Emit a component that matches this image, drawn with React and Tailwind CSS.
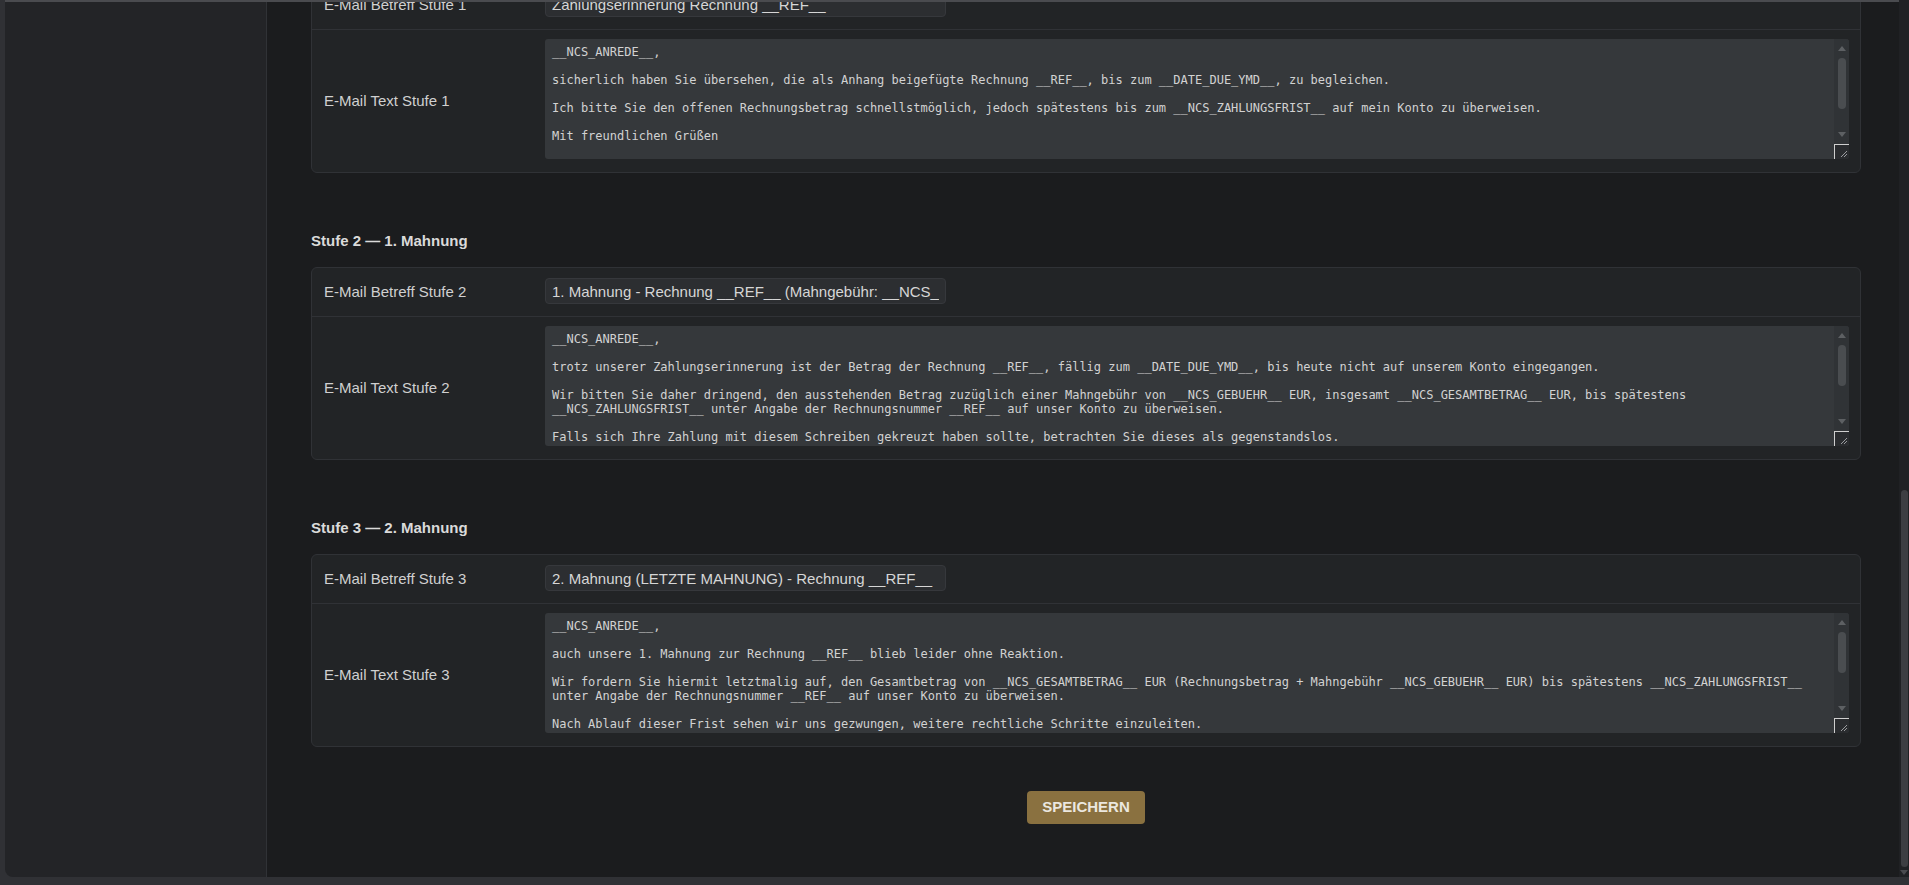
import React from "react";

const stages = [
  {
    level: 1,
    title: "Stufe 1 — Zahlungserinnerung",
    subject: "Zahlungserinnerung Rechnung __REF__",
    thumb: "h-[51px]",
    body:
      "__NCS_ANREDE__,\n\nsicherlich haben Sie übersehen, die als Anhang beigefügte Rechnung __REF__, bis zum __DATE_DUE_YMD__, zu begleichen.\n\nIch bitte Sie den offenen Rechnungsbetrag schnellstmöglich, jedoch spätestens bis zum __NCS_ZAHLUNGSFRIST__ auf mein Konto zu überweisen.\n\nMit freundlichen Grüßen\n\n__NCS_FIRMA__",
  },
  {
    level: 2,
    title: "Stufe 2 — 1. Mahnung",
    subject: "1. Mahnung - Rechnung __REF__ (Mahngebühr: __NCS_GEBUEHR__ EUR)",
    thumb: "h-[41px]",
    body:
      "__NCS_ANREDE__,\n\ntrotz unserer Zahlungserinnerung ist der Betrag der Rechnung __REF__, fällig zum __DATE_DUE_YMD__, bis heute nicht auf unserem Konto eingegangen.\n\nWir bitten Sie daher dringend, den ausstehenden Betrag zuzüglich einer Mahngebühr von __NCS_GEBUEHR__ EUR, insgesamt __NCS_GESAMTBETRAG__ EUR, bis spätestens __NCS_ZAHLUNGSFRIST__ unter Angabe der Rechnungsnummer __REF__ auf unser Konto zu überweisen.\n\nFalls sich Ihre Zahlung mit diesem Schreiben gekreuzt haben sollte, betrachten Sie dieses als gegenstandslos.\n\nMit freundlichen Grüßen\n\n__NCS_FIRMA__",
  },
  {
    level: 3,
    title: "Stufe 3 — 2. Mahnung",
    subject: "2. Mahnung (LETZTE MAHNUNG) - Rechnung __REF__",
    thumb: "h-[41px]",
    body:
      "__NCS_ANREDE__,\n\nauch unsere 1. Mahnung zur Rechnung __REF__ blieb leider ohne Reaktion.\n\nWir fordern Sie hiermit letztmalig auf, den Gesamtbetrag von __NCS_GESAMTBETRAG__ EUR (Rechnungsbetrag + Mahngebühr __NCS_GEBUEHR__ EUR) bis spätestens __NCS_ZAHLUNGSFRIST__ unter Angabe der Rechnungsnummer __REF__ auf unser Konto zu überweisen.\n\nNach Ablauf dieser Frist sehen wir uns gezwungen, weitere rechtliche Schritte einzuleiten.\n\nMit freundlichen Grüßen\n\n__NCS_FIRMA__",
  },
];

// dark scrollbar drawn beside the text box, with arrows and the resize grip
function TextScrollbar({ thumb }) {
  return (
    <div className="w-[15px] shrink-0 flex flex-col items-center bg-[#303336]">
      <div className="mt-[7px] w-0 h-0 border-l-[4px] border-r-[4px] border-b-[5px] border-l-transparent border-r-transparent border-b-[#5d6063]" />
      <div className={`mt-[7px] w-[8px] rounded-full bg-[#4a4d50] ${thumb}`} />
      <div className="flex-1" />
      <div className="w-0 h-0 border-l-[4px] border-r-[4px] border-t-[5px] border-l-transparent border-r-transparent border-t-[#5d6063]" />
      <div className="mt-[7px] w-[15px] h-[15px] border-t border-l border-[#cfcfcf] bg-[#2a2c2f] flex items-end justify-end">
        <svg width="9" height="9" viewBox="0 0 9 9" className="mb-[1px] mr-[1px]">
          <path d="M8 2 L2 8 M8 5 L5 8" stroke="#9a9c9f" strokeWidth="1" />
        </svg>
      </div>
    </div>
  );
}

function StageCard({ stage }) {
  return (
    <div className="rounded-[6px] border border-[#303236] bg-[#222426]">
      <div className="flex items-center pt-[10px] pb-[12px] border-b border-[#303236]">
        <label className="w-[233px] shrink-0 pl-[12px] pt-[2px] text-[15px] text-[#d0d0d0]">
          E-Mail Betreff Stufe {stage.level}
        </label>
        <input
          type="text"
          defaultValue={stage.subject}
          className="w-[401px] h-[26px] px-[6px] rounded-[4px] border border-[#36383c] bg-[#2c2e31] text-[15px] text-[#d6d6d6] outline-none font-['Liberation_Sans',Arial,sans-serif]"
        />
      </div>
      <div className="flex items-center pt-[9px] pb-[13px] pr-[11px]">
        <label className="w-[233px] shrink-0 pl-[12px] pt-[5px] text-[15px] text-[#d0d0d0]">
          E-Mail Text Stufe {stage.level}
        </label>
        <div className="flex-1 h-[120px] flex rounded-[3px] bg-[#35383b] overflow-hidden">
          <textarea
            defaultValue={stage.body}
            className="flex-1 h-full resize-none px-[7px] py-[6px] bg-transparent text-[12px] leading-[14px] text-[#d2d2d2] outline-none overflow-hidden [scrollbar-width:none] font-['DejaVu_Sans_Mono',monospace]"
          />
          <TextScrollbar thumb={stage.thumb} />
        </div>
      </div>
    </div>
  );
}

export default function App() {
  return (
    <div className="h-[885px] flex bg-[#303135] pl-[5px] pb-[8px] overflow-hidden font-['Liberation_Sans',Arial,sans-serif] [color-scheme:dark]">
      <div className="flex-1 flex border-t-2 border-[#4a4b4f] rounded-bl-[8px] overflow-hidden">
        {/* sidebar */}
        <aside className="w-[262px] shrink-0 bg-[#232427] border-r border-[#303236]" />

        {/* settings pane, scrolled down to the reminder stages */}
        <main className="flex-1 bg-[#1b1c1e] overflow-hidden pl-[44px] pr-[38px]">
          <div className="-mt-[22px]">
            <StageCard stage={stages[0]} />

            {stages.slice(1).map((stage) => (
              <section key={stage.level} className="mt-[58px]">
                <h3 className="mb-[16px] text-[15px] leading-[20px] font-bold text-[#dadada]">
                  {stage.title}
                </h3>
                <StageCard stage={stage} />
              </section>
            ))}

            <div className="mt-[44px] flex justify-center">
              <button className="h-[33px] px-[15px] rounded-[4px] bg-[#8a7140] text-[15px] font-bold text-[#ebe7df]">
                SPEICHERN
              </button>
            </div>
          </div>
        </main>
      </div>

      {/* page scrollbar */}
      <div className="w-[10px] shrink-0 bg-[#202124] flex flex-col items-center justify-end pb-[2px]">
        <div className="w-[7px] h-[377px] rounded-full bg-[#3d3e42]" />
        <div className="mt-[3px] w-0 h-0 border-l-[4px] border-r-[4px] border-t-[5px] border-l-transparent border-r-transparent border-t-[#4a4b4f]" />
      </div>
    </div>
  );
}
